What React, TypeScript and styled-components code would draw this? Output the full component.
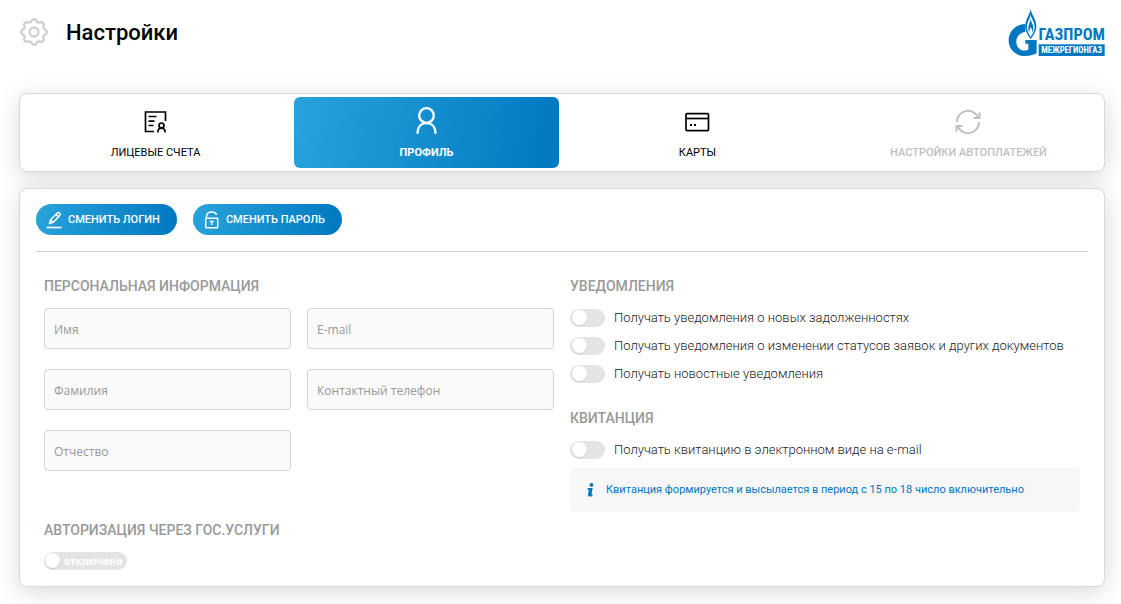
import React, { useState } from 'react';
import styled, { createGlobalStyle, css } from 'styled-components';

const GlobalStyle = createGlobalStyle`
  * { box-sizing: border-box; }
  body {
    margin: 0;
    background: #fff;
    color: #000;
    font-family: Roboto, "Liberation Sans", sans-serif;
    font-size: 13px;
  }
`;

const gradient = 'linear-gradient(100deg, #28a3db 0%, #0078c1 100%)';

const Page = styled.div`
  display: flex;
  flex-direction: column;
  padding: 0 16px 17px 19px;
`;

const Header = styled.header`
  display: flex;
  align-items: center;
  min-height: 64px;
  margin-bottom: 29px;
`;

const Title = styled.h1`
  flex: 1;
  margin: 0 0 0 17px;
  padding-top: 2px;
  font-size: 22px;
  line-height: 28px;
  font-weight: 500;
`;

const Card = styled.section`
  background: #fff;
  border: 1px solid #d5d9dd;
  border-radius: 8px;
  box-shadow: 0 5px 25px rgba(0, 0, 0, 0.15);
`;

const TabBar = styled(Card).attrs({ as: 'nav' })`
  display: grid;
  grid-template-columns: repeat(4, 1fr);
  margin-bottom: 16px;
`;

const Tab = styled.button<{ $active?: boolean }>`
  display: flex;
  flex-direction: column;
  align-items: center;
  gap: 4px;
  margin: 3px;
  padding: 9px 0 4px;
  border: 0;
  border-radius: 6px;
  background: none;
  color: #000;
  font: 400 11px/22px Roboto, "Liberation Sans", sans-serif;
  text-transform: uppercase;
  cursor: pointer;
  &:disabled { color: #c0c0c0; font-weight: 500; cursor: default; }
  ${p => p.$active && css`
    background: ${gradient};
    color: #fff;
    font-weight: 700;
  `}
`;

const Panel = styled(Card)`
  padding: 15px 16px 16px;
`;

const Actions = styled.div`
  display: flex;
  gap: 16px;
  padding-bottom: 16px;
  border-bottom: 1px solid #d2d2d2;
`;

const PillButton = styled.button`
  display: flex;
  align-items: center;
  gap: 5px;
  height: 31px;
  padding: 0 17px 0 9px;
  border: 0;
  border-radius: 16px;
  background: ${gradient};
  color: #fff;
  font: 500 11px/16px Roboto, "Liberation Sans", sans-serif;
  text-transform: uppercase;
  cursor: pointer;
`;

const Columns = styled.div`
  display: grid;
  grid-template-columns: repeat(2, 1fr);
  gap: 16px;
  padding: 24px 8px 0;
`;

const Heading = styled.h2`
  margin: 0 0 12px;
  color: #999;
  font-size: 14px;
  line-height: 20px;
  font-weight: 500;
  text-transform: uppercase;
`;

const Fields = styled.div`
  display: grid;
  grid-template-columns: repeat(2, 1fr);
  gap: 20px 16px;
  margin-bottom: 49px;
`;

const Field = styled.input<{ $alone?: boolean }>`
  min-width: 0;
  height: 41px;
  padding: 2px 9px 0;
  border: 1px solid #d5d5d5;
  border-radius: 4px;
  background: #fafafa;
  color: #333;
  font: 400 12px/18px "Open Sans", "Noto Sans", sans-serif;
  ${p => p.$alone && css`grid-column: 1;`}
  &::placeholder { color: #999; opacity: 1; }
`;

const SwitchList = styled.div`
  display: flex;
  flex-direction: column;
  gap: 8px;
`;

const SwitchLabel = styled.label`
  display: flex;
  align-items: center;
  gap: 9px;
  color: #222;
  font-size: 13px;
  line-height: 20px;
  font-weight: 300;
  cursor: pointer;
`;

const Switch = styled.input.attrs({ type: 'checkbox' })`
  appearance: none;
  flex: none;
  width: 35px;
  height: 18px;
  margin: 0;
  padding: 1px 2px;
  border-radius: 9px;
  background: #e4e4e4;
  cursor: pointer;
  &::before {
    content: '';
    display: block;
    width: 15px;
    height: 15px;
    border-radius: 50%;
    background: #fff;
    box-shadow: 0 1px 2px rgba(0, 0, 0, 0.1);
  }
  &:checked { background: #28a3db; }
  &:checked::before { margin-left: auto; }
`;

const TextSwitchLabel = styled.label<{ $on: boolean }>`
  display: flex;
  align-items: center;
  gap: 3px;
  width: fit-content;
  height: 18px;
  padding-right: 5px;
  border-radius: 9px;
  background: ${p => (p.$on ? '#28a3db' : '#e4e4e4')};
  color: #fff;
  font: 700 10px/18px "Open Sans", "Noto Sans", sans-serif;
  cursor: pointer;
`;

const KnobSwitch = styled(Switch)`
  width: 17px;
  padding-left: 1px;
  background: none;
  &:checked { background: none; }
`;

const Block = styled.div`
  margin-bottom: 24px;
`;

const Note = styled.p`
  display: flex;
  align-items: center;
  gap: 12px;
  margin: 8px 0 0;
  padding: 12px 17px;
  border-radius: 4px;
  background: #f7f7f7;
  color: #0078c1;
  font-size: 11px;
  line-height: 20px;
`;

const Icon = styled.svg`
  display: block;
  flex: none;
  fill: none;
  stroke: currentColor;
`;

const gearPath = (() => {
  const pts: string[] = [];
  for (let i = 0; i < 160; i++) {
    const a = (i / 160) * Math.PI * 2;
    const c = Math.cos(8 * a);
    const r = 11.6 + 1.1 * Math.tanh(2.2 * c);
    pts.push(`${(15 + r * Math.cos(a)).toFixed(2)} ${(15 + r * Math.sin(a)).toFixed(2)}`);
  }
  return `M${pts.join('L')}Z`;
})();

const GearIcon = () => (
  <Icon width="30" height="30" viewBox="0 0 30 30" strokeWidth="2.4" color="#d0d0d0" aria-hidden>
    <path d={gearPath} />
    <circle cx="15" cy="15" r="4.5" />
  </Icon>
);

const AccountIcon = () => (
  <Icon width="32" height="32" viewBox="0.5 0 32 32" strokeWidth="1.7" aria-hidden>
    <path d="M14.5 25.5H6V6h20v9M9 10.5h8M9 15.2h6M9 19.5h5" />
    <circle cx="22" cy="19.5" r="2.5" />
    <path d="M18.3 26.500c.1-2.900 1.500-4.300 3.700-4.300s3.600 1.400 3.700 4.300" />
  </Icon>
);

const ProfileIcon = () => (
  <Icon width="32" height="32" viewBox="0.5 0 32 32" strokeWidth="2.3" aria-hidden>
    <circle cx="16" cy="9.5" r="7.3" />
    <path d="M7 27.800c0-6.500 3.500-10.600 9-10.600s9 4.100 9 10.600" />
  </Icon>
);

const CardIcon = () => (
  <Icon width="32" height="32" viewBox="1 0 32 32" strokeWidth="1.7" aria-hidden>
    <rect x="5" y="7.6" width="22.5" height="17" rx="1" />
    <path d="M5 12.5h22.5" />
    <path d="M9 19h2M13 19h2" strokeWidth="2" />
  </Icon>
);

const RefreshIcon = () => (
  <Icon width="32" height="32" viewBox="1 0 32 32" strokeWidth="2" aria-hidden>
    <path d="M4.800 16A11.200 11.200 0 0 1 26 11M27.200 16A11.200 11.200 0 0 1 6 21" />
    <path d="M27.500 6.500V12h-6M4.500 25.500V20h6" />
  </Icon>
);

const PencilIcon = () => (
  <Icon width="18" height="18" viewBox="0 0 18 18" strokeWidth="1.5" aria-hidden>
    <path d="M4.500 12.500l1-3.700L12.300 2c.7-.7 1.400-.7 2 0l.5.5c.7.7.6 1.300 0 2L8.200 11.400zM11 3.400l2.500 2.500M5.500 8.800l2.700 2.600" />
    <path d="M1.500 16.500h15" strokeWidth="1.6" />
  </Icon>
);

const LockIcon = () => (
  <Icon width="19" height="18" viewBox="0 0 19 18" strokeWidth="1.5" aria-hidden>
    <rect x="3.7" y="7.2" width="12" height="9.6" rx=".6" />
    <path d="M4.500 7V5.200C4.500 2.700 6.800 1.100 9.700 1.100c2.500 0 4.300 1.100 5 2.900M7.700 10.500h4M9.700 10.500v3.500" />
  </Icon>
);

const InfoIcon = () => (
  <Icon width="7" height="14" viewBox="0 0 6 14" aria-hidden>
    <g fill="currentColor" stroke="none">
      <circle cx="3.9" cy="1.9" r="1.9" />
      <path d="M.2 4.900h5L4 11.300h1.200l-.5 1.700c-1.700.9-4.500.9-4.200-1.200L1.400 6.900H.2z" />
    </g>
  </Icon>
);

const logoFont = '"Roboto Condensed", Roboto, "Liberation Sans", sans-serif';

const Logo = () => (
  <Icon width="97" height="48" viewBox="55 24 291 144" role="img" aria-label="Газпром межрегионгаз">
    <g stroke="none">
      <path fill="#0078c1" d="M107 72C78 73 57 94 57 121c0 27 20 47 48 47 15 0 27-3 36-8v-40h-34v11h9v18c-20 8-36-5-36-24 0-15 11-28 27-30z" />
      <path fill="#0078c1" d="M123 26c-2 18-16 30-16 52 0 17 8 28 16 40 8-12 17-23 17-40 0-22-15-34-17-52z" />
      <path fill="#fff" d="M123 44c-3 14-11 22-11 37 0 12 5 20 11 30 6-10 12-18 12-30 0-15-9-23-12-37z" />
      <path fill="#0078c1" d="M123 57c-1 9-7 17-7 26 0 6 1 10 3 14 0-7 2-11 4-16 3 5 5 9 5 16 2-4 3-8 3-14 0-9-7-17-8-26z" />
      <rect x="147" y="133" width="198" height="35" fill="#0078c1" />
      <text x="246" y="120" fill="#0078c1" textAnchor="middle" fontFamily={logoFont} fontWeight="700" fontSize="49">ГАЗПРОМ</text>
      <text x="246" y="159" fill="#fff" textAnchor="middle" fontFamily={logoFont} fontWeight="700" fontSize="26">МЕЖРЕГИОНГАЗ</text>
    </g>
  </Icon>
);

export default function App() {
  const [gov, setGov] = useState(false);
  return (
    <>
      <GlobalStyle />
      <Page>
        <Header>
          <GearIcon />
          <Title>Настройки</Title>
          <Logo />
        </Header>
        <TabBar>
          <Tab type="button"><AccountIcon />Лицевые счета</Tab>
          <Tab type="button" $active aria-current="page"><ProfileIcon />Профиль</Tab>
          <Tab type="button"><CardIcon />Карты</Tab>
          <Tab type="button" disabled><RefreshIcon />Настройки автоплатежей</Tab>
        </TabBar>
        <Panel>
          <Actions>
            <PillButton type="button"><PencilIcon />Сменить логин</PillButton>
            <PillButton type="button"><LockIcon />Сменить пароль</PillButton>
          </Actions>
          <Columns>
            <div>
              <Heading>Персональная информация</Heading>
              <Fields>
                <Field placeholder="Имя" aria-label="Имя" />
                <Field placeholder="E-mail" aria-label="E-mail" type="email" />
                <Field placeholder="Фамилия" aria-label="Фамилия" />
                <Field placeholder="Контактный телефон" aria-label="Контактный телефон" type="tel" />
                <Field placeholder="Отчество" aria-label="Отчество" $alone />
              </Fields>
              <Heading>Авторизация через гос.услуги</Heading>
              <TextSwitchLabel $on={gov}>
                <KnobSwitch checked={gov} onChange={e => setGov(e.target.checked)} />
                {gov ? 'включено' : 'отключено'}
              </TextSwitchLabel>
            </div>
            <div>
              <Block>
                <Heading>Уведомления</Heading>
                <SwitchList>
                  <SwitchLabel><Switch />Получать уведомления о новых задолженностях</SwitchLabel>
                  <SwitchLabel><Switch />Получать уведомления о изменении статусов заявок и других документов</SwitchLabel>
                  <SwitchLabel><Switch />Получать новостные уведомления</SwitchLabel>
                </SwitchList>
              </Block>
              <Heading>Квитанция</Heading>
              <SwitchLabel><Switch />Получать квитанцию в электронном виде на e-mail</SwitchLabel>
              <Note><InfoIcon />Квитанция формируется и высылается в период с 15 по 18 число включительно</Note>
            </div>
          </Columns>
        </Panel>
      </Page>
    </>
  );
}
